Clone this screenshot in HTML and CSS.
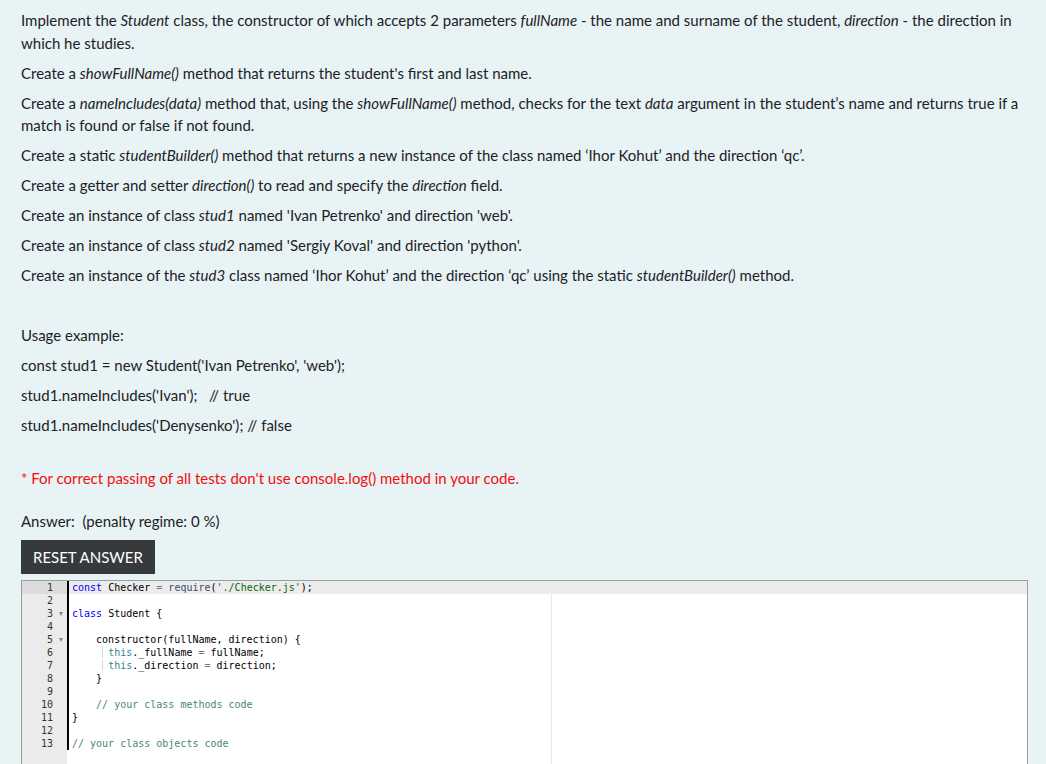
FILE: index.html
```html
<!DOCTYPE html>
<html lang="en">
<head>
<meta charset="utf-8">
<title>Student class</title>
<link rel="stylesheet" href="styles.css">
</head>
<body>
<div class="formulation">
  <div class="qtext">
    <p>Implement the <em>Student</em> class, the constructor of which accepts 2 parameters <em>fullName</em> - the name and surname of the student, <em>direction</em> - the direction in which he studies.</p>
    <p>Create a <em>showFullName()</em> method that returns the student's first and last name.</p>
    <p>Create a <em>nameIncludes(data)</em> method that, using the <em>showFullName()</em> method, checks for the text <em>data</em> argument in the student’s name and returns true if a match is found or false if not found.</p>
    <p>Create a static <em>studentBuilder()</em> method that returns a new instance of the class named ‘Ihor Kohut’ and the direction ‘qc’.</p>
    <p>Create a getter and setter <em>direction()</em> to read and specify the <em>direction</em> field.</p>
    <p>Create an instance of class <em>stud1</em> named 'Ivan Petrenko' and direction 'web'.</p>
    <p>Create an instance of class <em>stud2</em> named 'Sergiy Koval' and direction 'python'.</p>
    <p>Create an instance of the <em>stud3</em> class named ‘Ihor Kohut’ and the direction ‘qc’ using the static <em>studentBuilder()</em> method.</p>
    <p><br></p>
    <p>Usage example:</p>
    <p>const stud1 = new Student('Ivan Petrenko', 'web');</p>
    <p>stud1.nameIncludes('Ivan');&nbsp;&nbsp; // true</p>
    <p>stud1.nameIncludes('Denysenko'); // false</p>
    <p class="warning">* For correct passing of all tests don't use console.log() method in your code.</p>
  </div>
  <div class="answer-label">Answer:&nbsp; (penalty regime: 0 %)</div>
  <button class="reset" type="button">RESET ANSWER</button>
  <div class="editor">
    <div class="gutter">
      <div class="gcell active">1</div>
      <div class="gcell">2</div>
      <div class="gcell fold">3</div>
      <div class="gcell">4</div>
      <div class="gcell fold">5</div>
      <div class="gcell">6</div>
      <div class="gcell">7</div>
      <div class="gcell">8</div>
      <div class="gcell">9</div>
      <div class="gcell">10</div>
      <div class="gcell">11</div>
      <div class="gcell">12</div>
      <div class="gcell">13</div>
    </div>
    <div class="content">
      <div class="print-margin"></div>
      <div class="lines">
        <div class="line active"><span class="kw">const</span> Checker <span class="op">=</span> <span class="fn">require</span>(<span class="str">'./Checker.js'</span>);</div>
        <div class="line"></div>
        <div class="line"><span class="kw">class</span> Student {</div>
        <div class="line"></div>
        <div class="line">    constructor(fullName, direction) {</div>
        <div class="line"><span class="ind">     </span><span class="guide"> </span><span class="this">this</span>._fullName <span class="op">=</span> fullName;</div>
        <div class="line"><span class="ind">     </span><span class="guide"> </span><span class="this">this</span>._direction <span class="op">=</span> direction;</div>
        <div class="line">    }</div>
        <div class="line"></div>
        <div class="line">    <span class="cm">// your class methods code</span></div>
        <div class="line">}</div>
        <div class="line"></div>
        <div class="line"><span class="cm">// your class objects code</span></div>
      </div>
    </div>
  </div>
</div>
</body>
</html>
```

FILE: styles.css
```css
html, body {
  margin: 0;
  padding: 0;
  background: #ffffff;
}

body {
  font-family: "Lato", "Open Sans", sans-serif;
  font-size: 15px;
  color: #1d2125;
}

.formulation {
  background: #e7f3f5;
  padding: 9px 18px 0 21px;
  min-height: 755px;
}

.qtext p {
  margin: 0 0 7.5px 0;
  line-height: 22.5px;
}

.qtext em {
  font-style: italic;
}

.qtext .warning {
  color: #f40d0d;
  margin-top: 30px;
  margin-bottom: 21px;
}

.answer-label {
  line-height: 22.5px;
  margin-bottom: 7px;
}

.reset {
  display: block;
  background: #373a3c;
  color: #ffffff;
  border: 0;
  border-radius: 0;
  font-family: inherit;
  font-size: 15px;
  height: 34px;
  padding: 0 12px;
  margin: 0 0 6px 0;
  cursor: pointer;
}

.editor {
  display: flex;
  border: 1px solid #9c9c9c;
  border-bottom: 0;
  height: 240px;
  background: #ffffff;
  font-family: "DejaVu Sans Mono", monospace;
  font-size: 10px;
  color: #000000;
}

.gutter {
  width: 45px;
  flex: none;
  background: #ebebeb;
  color: #333333;
}

.gcell {
  height: 13px;
  line-height: 13px;
  text-align: right;
  padding-right: 14px;
  position: relative;
}

.gcell.active {
  background: #dcdcdc;
}

.gcell.fold::after {
  content: "";
  position: absolute;
  right: 4px;
  top: 5px;
  border-left: 2.5px solid transparent;
  border-right: 2.5px solid transparent;
  border-top: 4px solid #888888;
}

.content {
  flex: 1;
  position: relative;
}

.print-margin {
  position: absolute;
  left: 484px;
  top: 0;
  bottom: 0;
  width: 1px;
  background: #e8e8e8;
}

.lines {
  position: relative;
  border-left: 2px solid #000000;
  width: max-content;
  min-width: calc(100% - 2px);
}

.line {
  height: 13px;
  line-height: 13px;
  white-space: pre;
  padding-left: 3px;
}

.line.active {
  background: #ececec;
}

.kw { color: #0000ff; }
.op { color: #687687; }
.fn { color: #3c4c72; }
.str { color: #036a07; }
.cm { color: #4c886b; }
.this { color: #318495; }

.guide {
  box-shadow: inset 1px 0 0 #d6d6d6;
}
```
